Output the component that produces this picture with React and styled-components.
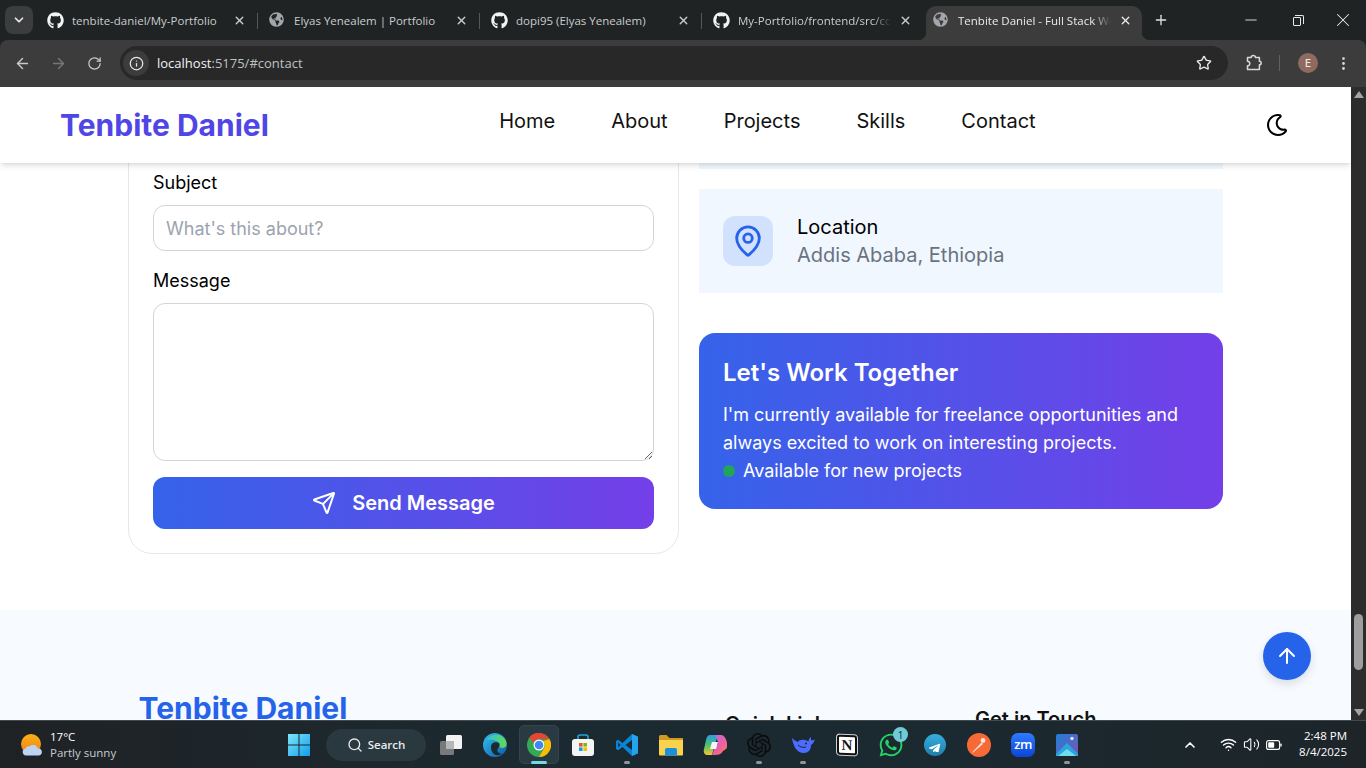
import React from "react";
import styled, { createGlobalStyle } from "styled-components";
import {
  ArrowLeft,
  ArrowRight,
  ArrowUp,
  ChevronDown,
  ChevronUp,
  EllipsisVertical,
  Info,
  MapPin,
  Minus,
  Plus,
  RotateCw,
  Search,
  Send,
  Star,
  Volume2,
  Wifi,
  X,
} from "lucide-react";
import { FaGithub, FaGlobeAmericas, FaRegMoon, FaTelegramPlane, FaWhatsapp } from "react-icons/fa";
import { SiOpenai } from "react-icons/si";

const GlobalStyle = createGlobalStyle`
  html, body {
    margin: 0;
    padding: 0;
    height: 100%;
    overflow: hidden;
    background: #fff;
  }
  * {
    box-sizing: border-box;
  }
`;

const Screen = styled.div`
  width: 1366px;
  height: 768px;
  display: flex;
  flex-direction: column;
  overflow: hidden;
  font-family: Inter, "Liberation Sans", sans-serif;
`;

/* browser chrome */
const TabStrip = styled.div`
  height: 40px;
  flex: none;
  display: flex;
  align-items: flex-start;
  background: #202324;
  color: #d6d8d9;
  font-family: "Open Sans", "Liberation Sans", sans-serif;
  font-size: 11.5px;
`;

const TabMenu = styled.div`
  width: 28px;
  height: 28px;
  margin: 6px 3px 0 5px;
  border-radius: 8px;
  background: #3b3d3f;
  display: flex;
  align-items: center;
  justify-content: center;
  color: #e8eaed;
`;

const Tab = styled.div`
  width: 222px;
  height: 28px;
  margin-top: 6px;
  padding: 0 12px 0 11px;
  display: flex;
  align-items: center;
  gap: 8px;
  position: relative;
  color: #c9cccf;
  &::after {
    content: "";
    display: ${(p) => (p.$divider ? "block" : "none")};
    position: absolute;
    right: 0;
    top: 7px;
    width: 1px;
    height: 16px;
    background: #55585a;
  }
`;

const ActiveTab = styled.div`
  width: 216px;
  height: 34px;
  margin: 6px 0 0 2px;
  padding: 0 10px 6px 7px;
  display: flex;
  align-items: center;
  gap: 8px;
  position: relative;
  border-radius: 10px 10px 0 0;
  background: #3c3c3c;
  color: #e8eaed;
  &::before,
  &::after {
    content: "";
    position: absolute;
    bottom: 0;
    width: 8px;
    height: 8px;
  }
  &::before {
    left: -8px;
    background: radial-gradient(circle at 0 0, transparent 8px, #3c3c3c 8.5px);
  }
  &::after {
    right: -8px;
    background: radial-gradient(circle at 100% 0, transparent 8px, #3c3c3c 8.5px);
  }
`;

const TabIcon = styled.span`
  width: 17px;
  height: 17px;
  flex: none;
  display: flex;
  color: ${(p) => (p.$globe ? "#a3a7ab" : "#f1f3f4")};
`;

const TabTitle = styled.span`
  flex: 1;
  white-space: nowrap;
  overflow: hidden;
  -webkit-mask-image: ${(p) =>
    p.$fade ? "linear-gradient(90deg, #000 88%, transparent)" : "none"};
  mask-image: ${(p) =>
    p.$fade ? "linear-gradient(90deg, #000 88%, transparent)" : "none"};
`;

const NewTab = styled.div`
  width: 38px;
  height: 28px;
  margin-top: 6px;
  display: flex;
  align-items: center;
  justify-content: center;
  color: #dfe1e3;
`;

const WindowButtons = styled.div`
  margin-left: auto;
  display: flex;
  height: 40px;
`;

const WindowButton = styled.div`
  width: 46px;
  height: 40px;
  display: flex;
  align-items: center;
  justify-content: center;
  color: #e8eaed;
`;

const RestoreGlyph = styled.div`
  width: 8px;
  height: 9px;
  margin-top: 2px;
  border: 1px solid #e8eaed;
  border-radius: 1px;
  position: relative;
  &::after {
    content: "";
    position: absolute;
    left: 1px;
    top: -3px;
    width: 8px;
    height: 8px;
    border-top: 1px solid #e8eaed;
    border-right: 1px solid #e8eaed;
    border-radius: 0 2px 0 0;
  }
`;

const ToolbarWrap = styled.div`
  height: 47px;
  flex: none;
  background: #202324;
`;

const Toolbar = styled.div`
  height: 47px;
  display: flex;
  align-items: center;
  padding: 0 7px 1px 4px;
  border-radius: 8px 8px 0 0;
  background: #3c3c3c;
  color: #c7cacd;
`;

const NavButton = styled.div`
  width: 36px;
  height: 32px;
  display: flex;
  align-items: center;
  justify-content: center;
  color: ${(p) => (p.$off ? "#75787b" : "#c7cacd")};
`;

const Omnibox = styled.div`
  width: 1108px;
  height: 34px;
  margin-left: 8px;
  padding-right: 16px;
  border-radius: 17px;
  background: #282828;
  display: flex;
  align-items: center;
  font-family: "Open Sans", "Liberation Sans", sans-serif;
  font-size: 13px;
`;

const SiteInfo = styled.div`
  width: 26px;
  height: 26px;
  margin: 0 8px 0 3px;
  border-radius: 50%;
  background: #3c3c3c;
  display: flex;
  align-items: center;
  justify-content: center;
  color: #e8eaed;
`;

const Host = styled.span`
  color: #f1f3f4;
`;

const UrlRest = styled.span`
  flex: 1;
  color: #bfc2c5;
`;

const ToolbarEnd = styled.div`
  display: flex;
  align-items: center;
  margin-left: 17px;
  color: #d6d8da;
`;

const ToolDivider = styled.div`
  width: 1px;
  height: 16px;
  margin: 0 18px 0 16px;
  background: #5f6265;
`;

const Avatar = styled.div`
  width: 20px;
  height: 20px;
  border-radius: 50%;
  background: #8f6b5f;
  color: #f3e7e2;
  font-size: 10px;
  font-weight: 500;
  display: flex;
  align-items: center;
  justify-content: center;
  margin-right: 17px;
`;

/* page viewport */
const Viewport = styled.div`
  flex: 1;
  min-height: 0;
  display: flex;
  position: relative;
  overflow: hidden;
`;

const Page = styled.div`
  flex: 1;
  min-width: 0;
  display: flex;
  flex-direction: column;
  background: #fff;
`;

const Header = styled.header`
  height: 76px;
  flex: none;
  position: relative;
  z-index: 2;
  padding: 0 62px 0 60px;
  display: flex;
  align-items: center;
  justify-content: space-between;
  background: #fff;
  box-shadow: 0 4px 6px -1px rgba(0, 0, 0, 0.1), 0 2px 4px -2px rgba(0, 0, 0, 0.1);
`;

const Logo = styled.div`
  font-size: 30px;
  font-weight: 700;
  line-height: 36px;
  color: ${(p) => p.$color};
`;

const Nav = styled.nav`
  display: flex;
  gap: 56px;
  margin: -8px 0 0 1px;
  font-size: 20px;
  line-height: 28px;
  color: #111;
`;

const ThemeToggle = styled.div`
  width: 24px;
  height: 24px;
  display: flex;
  align-items: center;
  justify-content: center;
  color: #000;
`;

const ContactGrid = styled.section`
  margin-top: -40px;
  padding-left: 128px;
  display: flex;
  align-items: flex-start;
  gap: 20px;
`;

const FormCard = styled.div`
  width: 551px;
  height: 431px;
  padding: 45px 24px 24px;
  border: 1px solid #e5e7eb;
  border-radius: 24px;
`;

const Label = styled.label`
  display: block;
  height: 28px;
  margin-bottom: 8px;
  font-size: 18px;
  line-height: 28px;
  color: #000;
`;

const TextInput = styled.input`
  display: block;
  width: 501px;
  height: 46px;
  padding: 0 12px;
  margin-bottom: 16px;
  border: 1px solid #d1d5db;
  border-radius: 12px;
  outline: 0;
  font: 18px Inter, sans-serif;
  &::placeholder {
    color: #9ca3af;
  }
`;

const TextArea = styled.textarea`
  display: block;
  width: 501px;
  height: 158px;
  margin-bottom: 16px;
  border: 1px solid #d1d5db;
  border-radius: 12px;
  outline: 0;
`;

const SendButton = styled.button`
  width: 501px;
  height: 52px;
  padding: 0;
  border: 0;
  border-radius: 12px;
  display: flex;
  align-items: center;
  justify-content: center;
  gap: 16px;
  background: linear-gradient(90deg, #3563ea, #743fe8);
  color: #fff;
  font: 600 20px Inter, sans-serif;
`;

const SideColumn = styled.div`
  width: 524px;
  display: flex;
  flex-direction: column;
`;

const InfoCard = styled.div`
  height: ${(p) => p.$height}px;
  margin-bottom: ${(p) => p.$gap}px;
  padding: 0 24px;
  display: flex;
  align-items: center;
  gap: 24px;
  background: #f0f7ff;
`;

const InfoIcon = styled.div`
  width: 50px;
  height: 50px;
  border-radius: 12px;
  background: #d3e2fc;
  color: #2563eb;
  display: flex;
  align-items: center;
  justify-content: center;
`;

const InfoTitle = styled.div`
  font-size: 20px;
  line-height: 28px;
  color: #000;
`;

const InfoText = styled.div`
  font-size: 20px;
  line-height: 28px;
  color: #6b7280;
`;

const PitchCard = styled.div`
  height: 176px;
  padding: 24px;
  border-radius: 16px;
  background: linear-gradient(90deg, #3563ea, #743fe8);
  color: #fff;
`;

const PitchTitle = styled.h3`
  margin: 0 0 12px;
  font-size: 24px;
  font-weight: 600;
  line-height: 32px;
`;

const PitchText = styled.p`
  margin: 0;
  font-size: 18px;
  line-height: 28px;
`;

const Availability = styled.div`
  display: flex;
  align-items: center;
  gap: 8px;
  font-size: 18px;
  line-height: 28px;
`;

const GreenDot = styled.span`
  width: 12px;
  height: 12px;
  border-radius: 50%;
  background: #22a55a;
`;

const Footer = styled.footer`
  flex: 1;
  margin-top: 56px;
  padding-left: 138.5px;
  display: flex;
  background: #f7faff;
  overflow: hidden;
`;

const FooterBrand = styled.div`
  width: 586.5px;
  padding-top: 80px;
`;

const FooterHeading = styled.div`
  width: ${(p) => p.$width}px;
  padding-top: ${(p) => p.$top}px;
  font-size: 20px;
  font-weight: 600;
  line-height: 28px;
  color: #111;
`;

const ScrollTop = styled.div`
  position: absolute;
  left: 1263px;
  top: 545px;
  z-index: 3;
  width: 48px;
  height: 48px;
  border-radius: 50%;
  background: #2563eb;
  color: #fff;
  display: flex;
  align-items: center;
  justify-content: center;
  box-shadow: 0 4px 10px rgba(0, 0, 0, 0.12);
`;

const Scrollbar = styled.div`
  width: 15px;
  flex: none;
  display: flex;
  flex-direction: column;
  align-items: center;
  justify-content: space-between;
  padding: 4px 0;
  position: relative;
  background: #2c2c2c;
`;

const ScrollArrow = styled.div`
  width: 0;
  height: 0;
  border-left: 5px solid transparent;
  border-right: 5px solid transparent;
  border-${(p) => (p.$up ? "bottom" : "top")}: 7px solid #a3a3a3;
`;

const ScrollThumb = styled.div`
  position: absolute;
  left: 3px;
  top: 527px;
  width: 9px;
  height: 56px;
  border-radius: 5px;
  background: #9e9e9e;
`;

/* windows taskbar */
const Taskbar = styled.div`
  height: 48px;
  flex: none;
  position: relative;
  z-index: 4;
  display: flex;
  align-items: center;
  border-top: 1px solid #44494c;
  background: linear-gradient(90deg, #1f2225 0%, #1b2a31 40%, #1b2930 70%, #1d2529 100%);
  color: #fff;
  font-family: "Open Sans", "Liberation Sans", sans-serif;
`;

const Weather = styled.div`
  width: 277px;
  flex: none;
  padding-left: 20px;
  display: flex;
  align-items: center;
  gap: 6px;
`;

const WeatherText = styled.div`
  font-size: 11.5px;
  line-height: 16px;
`;

const WeatherSub = styled.div`
  color: #c8cccf;
`;

const Dock = styled.div`
  display: flex;
  align-items: center;
`;

const DockItem = styled.div`
  width: 44px;
  height: 47px;
  position: relative;
  display: flex;
  align-items: center;
  justify-content: center;
  &::before {
    content: "";
    display: ${(p) => (p.$active ? "block" : "none")};
    position: absolute;
    left: 2px;
    right: 2px;
    top: 4px;
    bottom: 4px;
    border-radius: 5px;
    border: 1px solid #37444b;
    background: #2a3a42;
  }
  &::after {
    content: "";
    display: ${(p) => (p.$open || p.$active ? "block" : "none")};
    position: absolute;
    left: 50%;
    bottom: 4px;
    width: ${(p) => (p.$active ? "16px" : "6px")};
    height: 3px;
    margin-left: ${(p) => (p.$active ? "-8px" : "-3px")};
    border-radius: 2px;
    background: ${(p) => (p.$active ? "#76d8e4" : "#8f9599")};
  }
  & > * {
    position: relative;
    z-index: 1;
  }
`;

const SearchPill = styled.div`
  width: 100px;
  height: 32px;
  margin: 0 3px 0 5px;
  border-radius: 16px;
  background: #2a3940;
  display: flex;
  align-items: center;
  justify-content: center;
  gap: 5px;
  font-size: 11.5px;
  font-weight: 600;
  color: #e8eaeb;
`;

const Badge = styled.span`
  position: absolute !important;
  right: 5px;
  top: 6px;
  width: 15px;
  height: 15px;
  border-radius: 50%;
  background: #6fcbd6;
  color: #10252b;
  font-size: 10px;
  display: flex;
  align-items: center;
  justify-content: center;
`;

const ZoomMark = styled.div`
  width: 24px;
  height: 24px;
  border-radius: 7px;
  background: linear-gradient(180deg, #2f7bff, #0b45d6);
  color: #fff;
  font-size: 13px;
  font-weight: 600;
  line-height: 22px;
  text-align: center;
  letter-spacing: -0.5px;
`;

const NotionMark = styled.div`
  width: 20px;
  height: 20px;
  border: 2px solid #111;
  border-radius: 3px;
  background: #fff;
  box-shadow: 0 0 0 1px #cfd2d4;
  transform: skewY(3deg);
  color: #111;
  font: 700 15px/16px "Liberation Serif", serif;
  text-align: center;
`;

const Tray = styled.div`
  margin-left: auto;
  display: flex;
  align-items: center;
  padding-right: 19px;
`;

const TrayIcon = styled.div`
  margin-right: ${(p) => p.$gap}px;
  display: flex;
`;

const Clock = styled.div`
  width: 60px;
  margin-top: -1px;
  text-align: right;
  font-size: 11.5px;
  line-height: 16px;
`;

const tabs = [
  { title: "tenbite-daniel/My-Portfolio", github: true, divider: true },
  { title: "Elyas Yenealem | Portfolio", divider: true },
  { title: "dopi95 (Elyas Yenealem)", github: true, divider: true },
  { title: "My-Portfolio/frontend/src/components", github: true, fade: true },
];

function PuzzleIcon() {
  return (
    <svg width="18" height="18" viewBox="0 0 18 18" fill="none" stroke="currentColor" strokeWidth="1.500">
      <path d="M2.500 3.500h3.700a2.100 2.100 0 0 1 4.200 0h4v3.700a1.800 1.800 0 0 1 0 3.600v4.700h-11.900v-3.700a2.300 2.300 0 0 0 0-4.600z" strokeLinejoin="round" />
    </svg>
  );
}

function BatteryIcon() {
  return (
    <svg width="16" height="12" viewBox="0 0 16 12">
      <rect x=".6" y="1.600" width="13" height="8.800" rx="2" fill="none" stroke="#fff" strokeWidth="1.100" />
      <rect x="2.200" y="3.200" width="6" height="5.600" rx=".8" fill="#fff" />
      <rect x="14.300" y="4.500" width="1.400" height="3" rx=".6" fill="#fff" />
    </svg>
  );
}

function WeatherIcon() {
  return (
    <svg width="24" height="24" viewBox="0 0 24 24">
      <defs>
        <linearGradient id="sun" x1="0" y1="0" x2="0" y2="1">
          <stop offset="0" stopColor="#fbb216" />
          <stop offset="1" stopColor="#ef7d1a" />
        </linearGradient>
      </defs>
      <circle cx="11" cy="11" r="10" fill="url(#sun)" />
      <path d="M6 22.500a3.500 3.500 0 0 1-.6-6.900 4 4 0 0 1 4.300-2.400 5 5 0 0 1 8.200 2.400 3.400 3.400 0 0 1 4 3.400c0 2-1.400 3.500-3.400 3.500z" fill="#bcd4f2" />
    </svg>
  );
}

function WindowsLogo() {
  return (
    <svg width="24" height="24" viewBox="0 0 24 24">
      <defs>
        <linearGradient id="win" x1="0" y1="0" x2="1" y2="1">
          <stop offset="0" stopColor="#7ee6f8" />
          <stop offset="1" stopColor="#0f9fee" />
        </linearGradient>
      </defs>
      <path d="M1 1h10.500v10.500H1zM12.500 1H23v10.500H12.500zM1 12.500h10.500V23H1zM12.500 12.500H23V23H12.500z" fill="url(#win)" />
    </svg>
  );
}

function TaskView() {
  return (
    <svg width="24" height="24" viewBox="0 0 24 24">
      <rect x="1" y="8" width="14" height="14" rx="1.500" fill="#77797a" />
      <rect x="7" y="2" width="16" height="14" rx="1.500" fill="#f2f2f2" />
      <rect x="7" y="8" width="8" height="8" fill="#b5b6b7" />
    </svg>
  );
}

function EdgeIcon() {
  return (
    <svg width="24" height="24" viewBox="0 0 24 24">
      <defs>
        <linearGradient id="edgeA" x1="0" y1="0" x2="1" y2="1">
          <stop offset="0" stopColor="#35c1f1" />
          <stop offset="1" stopColor="#0c59a4" />
        </linearGradient>
        <linearGradient id="edgeB" x1="0" y1="0" x2="1" y2="0">
          <stop offset="0" stopColor="#2fc4d8" />
          <stop offset="1" stopColor="#66d84f" />
        </linearGradient>
      </defs>
      <circle cx="12" cy="12" r="12" fill="url(#edgeA)" />
      <path d="M4 7C7 1 18-1 22.500 7c2 4 1 8-3 8-3 0-4-2-3-4-1-3-6-5-12.500-4z" fill="url(#edgeB)" />
      <path d="M8 14c0-4 4-6 8-4 1 2 .5 3.500-.5 4.500C13 17 15 21 19 20.500 15 24 8 22 8 14z" fill="#1b2a31" />
    </svg>
  );
}

function ChromeIcon() {
  return (
    <svg width="24" height="24" viewBox="0 0 24 24">
      <circle cx="12" cy="12" r="12" fill="#34a853" />
      <path d="M12 0a12 12 0 0 1 10.400 6H12a6 6 0 0 0-5.700 4.100L2.300 4.200A12 12 0 0 1 12 0z" fill="#ea4335" />
      <path d="M22.400 6A12 12 0 0 1 12 24l5.200-9A6 6 0 0 0 16 8.200z" fill="#fbbc04" />
      <circle cx="12" cy="12" r="5.500" fill="#fff" />
      <circle cx="12" cy="12" r="4.300" fill="#4285f4" />
    </svg>
  );
}

function StoreIcon() {
  return (
    <svg width="24" height="24" viewBox="0 0 24 24">
      <path d="M7 7V4a2 2 0 0 1 2-2h6a2 2 0 0 1 2 2v3" fill="none" stroke="#1fa4dc" strokeWidth="1.600" />
      <rect x="1" y="6" width="22" height="17" rx="3" fill="#f4f4f4" />
      <path d="M8 10h3.600v3.600H8z" fill="#f25022" />
      <path d="M12.400 10H16v3.600h-3.600z" fill="#7fba00" />
      <path d="M8 14.400h3.600V18H8z" fill="#00a4ef" />
      <path d="M12.400 14.400H16V18h-3.600z" fill="#ffb900" />
    </svg>
  );
}

function VsCodeIcon() {
  return (
    <svg width="24" height="24" viewBox="0 0 24 24">
      <path d="M17 1l6 2.800v16.400L17 23 7.500 14l-4.300 3.300L1 16V8l2.200-1.300L7.500 10z" fill="#0a84d6" />
      <path d="M17 7l-6.500 5 6.500 5z" fill="#1b2a31" />
      <path d="M3.200 9.500L5.500 12l-2.300 2.500z" fill="#1b2a31" />
      <path d="M17 1l6 2.800v16.400L17 23z" fill="#25a3ec" />
    </svg>
  );
}

function FolderIcon() {
  return (
    <svg width="24" height="24" viewBox="0 0 24 24">
      <path d="M0 3.500A1.500 1.500 0 0 1 1.500 2h6l3 3H24v5H0z" fill="#cf9a20" />
      <path d="M0 7h24v14.500a1 1 0 0 1-1 1H1a1 1 0 0 1-1-1z" fill="#fbd24e" />
      <path d="M6 16.500A1.500 1.500 0 0 1 7.500 15h9a1.500 1.500 0 0 1 1.500 1.500v6H6z" fill="#1a8fdc" />
    </svg>
  );
}

function CopilotIcon() {
  return (
    <svg width="24" height="24" viewBox="0 0 24 24">
      <defs>
        <linearGradient id="copA" x1="0" y1="0" x2="0" y2="1">
          <stop offset="0" stopColor="#2b9be8" />
          <stop offset=".5" stopColor="#48c46e" />
          <stop offset="1" stopColor="#f7c52c" />
        </linearGradient>
        <linearGradient id="copB" x1="0" y1="0" x2="1" y2="1">
          <stop offset="0" stopColor="#b06cf0" />
          <stop offset=".6" stopColor="#f0609b" />
          <stop offset="1" stopColor="#f98a3c" />
        </linearGradient>
      </defs>
      <path d="M7 2h8l-3 9-3 11H5c-3 0-5-2-4-6l2-9c.5-3 2-5 4-5z" fill="url(#copA)" />
      <path d="M12 2h6c3 0 5 3 6 8 .5 3 0 5-1 6l-3 2c-2 3-4 4-8 4H9l3-8c2-1 3-3 3-5z" fill="url(#copB)" />
      <path d="M9 9h6l-2 7H7z" fill="#f6f2ff" />
    </svg>
  );
}

function DeepSeekIcon() {
  return (
    <svg width="24" height="24" viewBox="0 0 24 24">
      <path d="M1 5c1 7 4 15 12 15 5 0 7-4 7-8 1.500-.5 3-3 4-6-1.500 1.500-3 1.500-4 1.200-.2-1.200 0-2.200 0-3.200-1.500 1-2.500 2.500-2.500 4.500C14 6 8 6 7 9 5 8 3 7 1 5z" fill="#4d6bfe" />
      <path d="M7 12c2 2 5 3 8 2" fill="none" stroke="#1b2a31" strokeWidth="1" />
      <circle cx="15" cy="10.500" r="1" fill="#1b2a31" />
    </svg>
  );
}

function TelegramIcon() {
  return (
    <svg width="22" height="22" viewBox="0 0 22 22">
      <defs>
        <linearGradient id="tg" x1="0" y1="0" x2="0" y2="1">
          <stop offset="0" stopColor="#37aee2" />
          <stop offset="1" stopColor="#1e7ea8" />
        </linearGradient>
      </defs>
      <circle cx="11" cy="11" r="11" fill="url(#tg)" />
      <foreignObject x="4" y="4" width="14" height="14">
        <FaTelegramPlane size={13} color="#fff" />
      </foreignObject>
    </svg>
  );
}

function PostmanIcon() {
  return (
    <svg width="24" height="24" viewBox="0 0 24 24">
      <circle cx="12" cy="12" r="12" fill="#f76935" />
      <path d="M5 19.500l9.500-10 1.500 1.500-10 8.500z" fill="#ffe3d6" />
      <circle cx="16" cy="7.500" r="2.400" fill="#ffe3d6" />
    </svg>
  );
}

function PhotosIcon() {
  return (
    <svg width="22" height="22" viewBox="0 0 22 22">
      <defs>
        <linearGradient id="photoBg" x1="0" y1="0" x2="1" y2="1">
          <stop offset="0" stopColor="#1f7fd6" />
          <stop offset="1" stopColor="#7a55b5" />
        </linearGradient>
      </defs>
      <rect width="22" height="22" rx="2" fill="url(#photoBg)" />
      <path d="M0 20l11-11 11 11v2H0z" fill="#2aa6dd" />
      <path d="M2 22l9-7 9 7z" fill="#6fdcf0" />
      <circle cx="16" cy="4.500" r="1.700" fill="#dfe7f7" />
    </svg>
  );
}

function App() {
  return (
    <Screen>
      <GlobalStyle />
      <TabStrip>
        <TabMenu>
          <ChevronDown size={14} strokeWidth={3} />
        </TabMenu>
        {tabs.map((tab) => (
          <Tab key={tab.title} $divider={tab.divider}>
            <TabIcon $globe={!tab.github}>
              {tab.github ? <FaGithub size={17} /> : <FaGlobeAmericas size={15} />}
            </TabIcon>
            <TabTitle $fade={tab.fade}>{tab.title}</TabTitle>
            <X size={13} strokeWidth={2.5} />
          </Tab>
        ))}
        <ActiveTab>
          <TabIcon $globe>
            <FaGlobeAmericas size={15} />
          </TabIcon>
          <TabTitle $fade>Tenbite Daniel - Full Stack Web Developer</TabTitle>
          <X size={13} strokeWidth={2.5} />
        </ActiveTab>
        <NewTab>
          <Plus size={16} strokeWidth={2} />
        </NewTab>
        <WindowButtons>
          <WindowButton>
            <Minus size={18} strokeWidth={1.2} />
          </WindowButton>
          <WindowButton>
            <RestoreGlyph />
          </WindowButton>
          <WindowButton>
            <X size={22} strokeWidth={1.1} />
          </WindowButton>
        </WindowButtons>
      </TabStrip>
      <ToolbarWrap>
        <Toolbar>
          <NavButton>
            <ArrowLeft size={17} />
          </NavButton>
          <NavButton $off>
            <ArrowRight size={17} />
          </NavButton>
          <NavButton>
            <RotateCw size={15} />
          </NavButton>
          <Omnibox>
            <SiteInfo>
              <Info size={15} />
            </SiteInfo>
            <Host>localhost</Host>
            <UrlRest>:5175/#contact</UrlRest>
            <Star size={16} color="#e8eaed" />
          </Omnibox>
          <ToolbarEnd>
            <PuzzleIcon />
            <ToolDivider />
            <Avatar>E</Avatar>
            <EllipsisVertical size={17} />
          </ToolbarEnd>
        </Toolbar>
      </ToolbarWrap>
      <Viewport>
        <Page>
          <Header>
            <Logo $color="#4f46e5">Tenbite Daniel</Logo>
            <Nav>
              <span>Home</span>
              <span>About</span>
              <span>Projects</span>
              <span>Skills</span>
              <span>Contact</span>
            </Nav>
            <ThemeToggle>
              <FaRegMoon size={22} />
            </ThemeToggle>
          </Header>
          <ContactGrid>
            <FormCard>
              <Label>Subject</Label>
              <TextInput placeholder="What's this about?" readOnly />
              <Label>Message</Label>
              <TextArea readOnly />
              <SendButton>
                <Send size={24} />
                Send Message
              </SendButton>
            </FormCard>
            <SideColumn>
              <InfoCard $height={46} $gap={20} />
              <InfoCard $height={104} $gap={40}>
                <InfoIcon>
                  <MapPin size={34} />
                </InfoIcon>
                <div>
                  <InfoTitle>Location</InfoTitle>
                  <InfoText>Addis Ababa, Ethiopia</InfoText>
                </div>
              </InfoCard>
              <PitchCard>
                <PitchTitle>Let's Work Together</PitchTitle>
                <PitchText>
                  I'm currently available for freelance opportunities and always excited to work on
                  interesting projects.
                </PitchText>
                <Availability>
                  <GreenDot />
                  Available for new projects
                </Availability>
              </PitchCard>
            </SideColumn>
          </ContactGrid>
          <Footer>
            <FooterBrand>
              <Logo $color="#2563eb">Tenbite Daniel</Logo>
            </FooterBrand>
            <FooterHeading $width={250} $top={100}>
              Quick Links
            </FooterHeading>
            <FooterHeading $width={200} $top={95}>
              Get in Touch
            </FooterHeading>
          </Footer>
        </Page>
        <Scrollbar>
          <ScrollArrow $up />
          <ScrollThumb />
          <ScrollArrow />
        </Scrollbar>
        <ScrollTop>
          <ArrowUp size={24} />
        </ScrollTop>
      </Viewport>
      <Taskbar>
        <Weather>
          <WeatherIcon />
          <WeatherText>
            17°C
            <WeatherSub>Partly sunny</WeatherSub>
          </WeatherText>
        </Weather>
        <Dock>
          <DockItem>
            <WindowsLogo />
          </DockItem>
          <SearchPill>
            <Search size={16} />
            Search
          </SearchPill>
          <DockItem>
            <TaskView />
          </DockItem>
          <DockItem>
            <EdgeIcon />
          </DockItem>
          <DockItem $active>
            <ChromeIcon />
          </DockItem>
          <DockItem>
            <StoreIcon />
          </DockItem>
          <DockItem $open>
            <VsCodeIcon />
          </DockItem>
          <DockItem>
            <FolderIcon />
          </DockItem>
          <DockItem>
            <CopilotIcon />
          </DockItem>
          <DockItem $open>
            <SiOpenai size={24} color="#0c0c0c" />
          </DockItem>
          <DockItem $open>
            <DeepSeekIcon />
          </DockItem>
          <DockItem>
            <NotionMark>N</NotionMark>
          </DockItem>
          <DockItem>
            <FaWhatsapp size={26} color="#25d366" />
            <Badge>1</Badge>
          </DockItem>
          <DockItem>
            <TelegramIcon />
          </DockItem>
          <DockItem>
            <PostmanIcon />
          </DockItem>
          <DockItem>
            <ZoomMark>zm</ZoomMark>
          </DockItem>
          <DockItem $open>
            <PhotosIcon />
          </DockItem>
        </Dock>
        <Tray>
          <TrayIcon $gap={22}>
            <ChevronUp size={16} strokeWidth={2.5} />
          </TrayIcon>
          <TrayIcon $gap={6}>
            <Wifi size={17} />
          </TrayIcon>
          <TrayIcon $gap={6}>
            <Volume2 size={17} strokeWidth={1.5} />
          </TrayIcon>
          <TrayIcon $gap={5}>
            <BatteryIcon />
          </TrayIcon>
          <Clock>
            2:48 PM
            <br />
            8/4/2025
          </Clock>
        </Tray>
      </Taskbar>
    </Screen>
  );
}

export default App;
